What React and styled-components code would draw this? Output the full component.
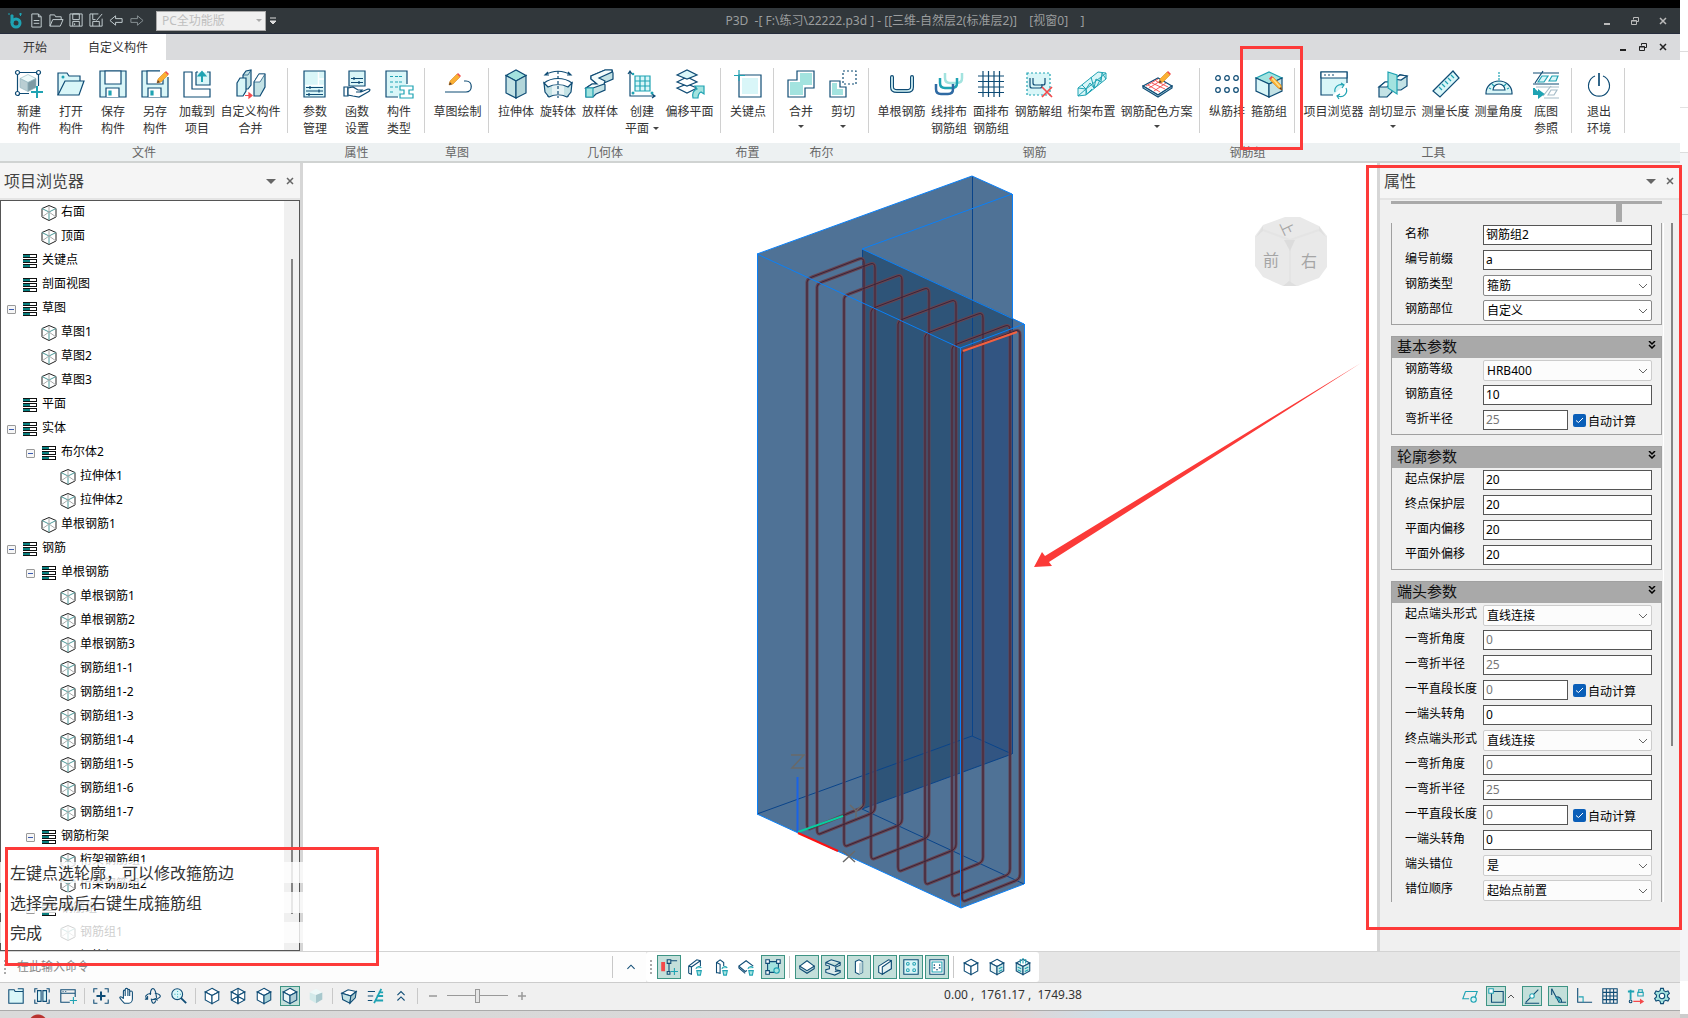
// App.jsx
import React from "react";
import styled, { createGlobalStyle } from "styled-components";

const NAVY = "#0f4c75";
const TEAL = "#1fa3b3";
const PALE = "#d9f6f8";
const MINT = "#a3e3df";
const GREY = "#c3e2e5";
const RED = "#f4494b";

/* ===== data ===== */
const ribbonGroups = [
  {
    title: "文件",
    first: true,
    items: [
      { icon: "newPart", lines: ["新建", "构件"] },
      { icon: "open", lines: ["打开", "构件"] },
      { icon: "save", lines: ["保存", "构件"] },
      { icon: "saveAs", lines: ["另存", "构件"] },
      { icon: "load", lines: ["加载到", "项目"] },
      { icon: "merge", lines: ["自定义构件", "合并"], width: 65 },
    ],
  },
  {
    title: "属性",
    items: [
      { icon: "params", lines: ["参数", "管理"] },
      { icon: "funcs", lines: ["函数", "设置"] },
      { icon: "types", lines: ["构件", "类型"] },
    ],
  },
  { title: "草图", items: [{ icon: "sketch", lines: ["草图绘制"], width: 53 }] },
  {
    title: "几何体",
    items: [
      { icon: "extrude", lines: ["拉伸体"] },
      { icon: "revolve", lines: ["旋转体"] },
      { icon: "loft", lines: ["放样体"] },
      { icon: "plane", lines: ["创建", "平面"], inlineArrow: true },
      { icon: "offset", lines: ["偏移平面"], width: 53 },
    ],
  },
  { title: "布置", items: [{ icon: "keyPoint", lines: ["关键点"] }] },
  {
    title: "布尔",
    items: [
      { icon: "union", lines: ["合并"], arrow: true },
      { icon: "cut", lines: ["剪切"], arrow: true },
    ],
  },
  {
    title: "钢筋",
    items: [
      { icon: "singleBar", lines: ["单根钢筋"], width: 53 },
      { icon: "lineBar", lines: ["线排布", "钢筋组"] },
      { icon: "gridBar", lines: ["面排布", "钢筋组"] },
      { icon: "ungroup", lines: ["钢筋解组"], width: 53 },
      { icon: "truss", lines: ["桁架布置"], width: 53 },
      { icon: "colors", lines: ["钢筋配色方案"], width: 77, arrow: true },
    ],
  },
  {
    title: "钢筋组",
    items: [
      { icon: "dots", lines: ["纵筋排"] },
      { icon: "stirrup", lines: ["箍筋组"] },
    ],
  },
  {
    title: "工具",
    items: [
      { icon: "browser", lines: ["项目浏览器"], width: 65 },
      { icon: "section", lines: ["剖切显示"], width: 53, arrow: true },
      { icon: "ruler", lines: ["测量长度"], width: 53 },
      { icon: "protractor", lines: ["测量角度"], width: 53 },
      { icon: "underlay", lines: ["底图", "参照"] },
    ],
  },
  { title: "", items: [{ icon: "power", lines: ["退出", "环境"] }] },
];

const treeItems = [
  { level: 1, text: "右面" },
  { level: 1, text: "顶面" },
  { level: 0, text: "关键点", folder: true },
  { level: 0, text: "剖面视图", folder: true },
  { level: 0, text: "草图", folder: true, open: true },
  { level: 1, text: "草图1" },
  { level: 1, text: "草图2" },
  { level: 1, text: "草图3" },
  { level: 0, text: "平面", folder: true },
  { level: 0, text: "实体", folder: true, open: true },
  { level: 1, text: "布尔体2", folder: true, open: true },
  { level: 2, text: "拉伸体1" },
  { level: 2, text: "拉伸体2" },
  { level: 1, text: "单根钢筋1" },
  { level: 0, text: "钢筋", folder: true, open: true },
  { level: 1, text: "单根钢筋", folder: true, open: true },
  { level: 2, text: "单根钢筋1" },
  { level: 2, text: "单根钢筋2" },
  { level: 2, text: "单根钢筋3" },
  { level: 2, text: "钢筋组1-1" },
  { level: 2, text: "钢筋组1-2" },
  { level: 2, text: "钢筋组1-3" },
  { level: 2, text: "钢筋组1-4" },
  { level: 2, text: "钢筋组1-5" },
  { level: 2, text: "钢筋组1-6" },
  { level: 2, text: "钢筋组1-7" },
  { level: 1, text: "钢筋桁架", folder: true, open: true },
  { level: 2, text: "桁架钢筋组1" },
  { level: 2, text: "桁架钢筋组2" },
  { level: 1, text: "钢筋组", folder: true, open: true },
  { level: 2, text: "钢筋组1" },
  { level: 2, text: "钢筋组", folder: true },
];

const propertyGroups = [
  {
    rows: [
      { label: "名称", value: "钢筋组2" },
      { label: "编号前缀", value: "a" },
      { label: "钢筋类型", select: "箍筋", strong: true },
      { label: "钢筋部位", select: "自定义", strong: true },
    ],
  },
  {
    title: "基本参数",
    rows: [
      { label: "钢筋等级", select: "HRB400" },
      { label: "钢筋直径", value: "10" },
      { label: "弯折半径", value: "25", auto: true },
    ],
  },
  {
    title: "轮廓参数",
    rows: [
      { label: "起点保护层", value: "20" },
      { label: "终点保护层", value: "20" },
      { label: "平面内偏移", value: "20" },
      { label: "平面外偏移", value: "20" },
    ],
  },
  {
    title: "端头参数",
    rows: [
      { label: "起点端头形式", select: "直线连接" },
      { label: "一弯折角度", value: "0", muted: true },
      { label: "一弯折半径", value: "25", muted: true },
      { label: "一平直段长度", value: "0", auto: true },
      { label: "一端头转角", value: "0" },
      { label: "终点端头形式", select: "直线连接" },
      { label: "一弯折角度", value: "0", muted: true },
      { label: "一弯折半径", value: "25", muted: true },
      { label: "一平直段长度", value: "0", auto: true },
      { label: "一端头转角", value: "0" },
      { label: "端头错位", select: "是" },
      { label: "错位顺序", select: "起始点前置" },
    ],
  },
];

/* ===== icons ===== */
const pencil = (
  <>
    <path d="M16 13l1-4 7-7 3 3-7 7z" fill="#fbb034" stroke="#d98a1c" strokeWidth=".6" />
    <path d="M24 2l1-1 3 3-1 1z" fill={RED} stroke="none" />
    <path d="M16 13l.8-3 2.2 2.200z" fill="#5a3b28" stroke="none" />
  </>
);

const cube = (fillL, fillR, fillT) => (
  <>
    <path d="M10 1.500l7.500 4L10 9.500l-7.500-4z" fill={fillT} />
    <path d="M2.500 5.500L10 9.500v9L2.500 14.500z" fill={fillL} />
    <path d="M17.500 5.500L10 9.500v9l7.500-4z" fill={fillR} />
  </>
);

const bigIcons = {
  newPart: (
    <>
      <path d="M4 2.500h18M2.500 4v18M4 23.500h10M23.500 4v12" />
      <g fill="#fff">
        <circle cx="2.500" cy="2.500" r="2" />
        <circle cx="23.500" cy="2.500" r="2" />
        <circle cx="2.500" cy="23.500" r="2" />
      </g>
      <g stroke="#8fb3bd" strokeWidth=".6">
        <path d="M13 4.500l8 4-8 4-8-4z" fill="#eefafa" />
        <path d="M5 8.500l8 4v9l-8-4z" fill="#b9ced3" />
        <path d="M21 8.500l-8 4v9l8-4z" fill="#7d9aa4" />
      </g>
      <path d="M22 16v12M16 22h12" stroke={TEAL} strokeWidth="2" />
    </>
  ),
  open: (
    <>
      <path d="M1 25V3h9l2 3h11v5" fill={PALE} />
      <path d="M1 25L8 11h19l-5 14z" fill={PALE} />
      <circle cx="6" cy="7" r="1.500" fill={TEAL} stroke="none" />
    </>
  ),
  save: (
    <>
      <path d="M1 1h26v26H1z" fill={PALE} />
      <path d="M6 1h16v13H6z" fill="#fff" />
      <path d="M7 27v-9h13v9" fill="#fff" />
      <path d="M10 21h2v4h-2z" fill={TEAL} stroke={TEAL} />
    </>
  ),
  saveAs: (
    <>
      <path d="M1 1h26v26H1z" fill={PALE} />
      <path d="M6 1h16v13H6z" fill="#fff" />
      <path d="M7 27v-9h13v9" fill="#fff" />
      <path d="M10 21h2v4h-2z" fill={TEAL} stroke={TEAL} />
      <path d="M19 0h9v7h-9z" fill="#fff" stroke="none" />
      {pencil}
    </>
  ),
  load: (
    <>
      <path d="M7 2H1v25h26v-8H9V2z" fill="#fff" />
      <path d="M13 2v13h14V2h-3M13 2h2" fill={PALE} />
      <path d="M19 12V3M16 5.500L19 2l3 3.500z" stroke={TEAL} strokeWidth="2" fill={TEAL} />
    </>
  ),
  merge: (
    <>
      <path d="M6 5l3-4 5-1v15l-3 4H6z" fill={GREY} />
      <path d="M6 5h5l3-5" strokeWidth=".7" />
      <path d="M0 13l3-5h6v13l-3 5H0z" fill={PALE} />
      <path d="M17 12l5-8h6v13l-5 9h-6z" fill={GREY} />
      <path d="M17 12l5-8h6l-5 8z" fill="#fff" strokeWidth=".7" />
      <path d="M8 25.500h6M12 23l3 2.500-3 2.500z" stroke={RED} fill={RED} />
    </>
  ),
  params: (
    <>
      <path d="M3 1h21v26H3z" fill={PALE} />
      <path d="M17.500 2v13M4 15.500h19M17 9h6" stroke="#fff" strokeWidth="1.500" />
      <path d="M5 17.500h17M5 21h17M5 24.500h17M9 16v3M18 19.500v3M8 23v3" />
    </>
  ),
  funcs: (
    <>
      <path d="M6 1h16v15H6z" fill={PALE} />
      <path d="M8 8.500h12M8 12.500h12M11 7v3M16 11v3" />
      <path d="M1 17h4v9H1z" fill="#fff" />
      <path d="M5 18l5-1 5 3h4l-2 2h-4 5l7-3c3 0 2 2 0 3l-9 5-6-1-5-1z" fill="#fff" />
    </>
  ),
  types: (
    <>
      <path d="M13 27H1V1h21v13" fill={PALE} />
      <path d="M5 6.500h3M10 6.500h8M5 12h3M10 12h8M5 17h3M10 17h3M5 22h3" stroke={TEAL} strokeDasharray="3 1" />
      <path d="M15 16h13v4h-4v4h4v4H15v-4h4v-4h-4z" fill="#fff" stroke={TEAL} />
    </>
  ),
  sketch: (
    <>
      <path d="M1 22h21c7 0 7-11 0-11h-2" />
      <g transform="translate(-11 2)">{pencil}</g>
    </>
  ),
  extrude: (
    <>
      <path d="M4 5.500L14 0l10 5.500L14 11z" fill={MINT} />
      <path d="M4 5.500l10 5.500v17L4 23z" fill={GREY} />
      <path d="M24 5.500L14 11v17l10-5z" fill="#b3d6da" />
    </>
  ),
  revolve: (
    <>
      <path d="M1 5c8-5 18-5 26 0M4 2L1 5h4M24 2l3 3h-4" />
      <path d="M0 13c8-6 20-6 28 0l-3 5-1 8c-6-3-14-3-20 0l-1-8z" fill="#fff" />
      <path d="M0 13l4 4c6-3 14-3 20 0l4-4-1 9-4 5c-6-3-12-3-18 0l-4-5z" fill={GREY} />
      <path d="M8 16c4-1 8-1 12 0v9c-4-1-8-1-12 0z" fill="#fff" stroke="none" opacity=".6" />
      <path d="M14 1v27" strokeDasharray="3 2" />
    </>
  ),
  loft: (
    <>
      <path d="M0 18l6-4h5l-6-5V6l14-6h7l1 3v6l-9 4 1 2v5l-9 4-3 3H0z" fill={GREY} />
      <path d="M5 6l14-6h7v2l-13 6 6 3-1 3-11 4H0l6-4h5l-6-5z" fill="#f4fcfc" />
      <path d="M0 18h7v9H0z" fill={MINT} stroke={TEAL} />
    </>
  ),
  plane: (
    <>
      <path d="M2 1v25h24M0 4l2-3 2 3M24 24l3 2-3 2" />
      <path d="M7 6h15v15H7zM12 6v15M17 6v15M7 11h15M7 16h15" stroke={TEAL} fill={PALE} />
      <circle cx="5" cy="4" r="1.300" fill={TEAL} stroke="none" />
      <circle cx="5" cy="23" r="1.500" fill={TEAL} stroke="none" />
      <circle cx="24" cy="23" r="1.500" fill={TEAL} stroke="none" />
    </>
  ),
  offset: (
    <g>
      <path d="M1 18l10-4 10 4-10 5z" fill="#fff" />
      <path d="M1 12l10-5 10 5-10 4z" fill="#fff" />
      <path d="M1 5l10-5 10 5-10 4z" fill={PALE} />
      <path d="M17 28c-1-5 1-8 4-9l-2-3h9v8l-3-2c-2 1-3 3-3 6z" fill={MINT} stroke={TEAL} />
    </g>
  ),
  keyPoint: (
    <>
      <path d="M5 5h22v22H5z" fill="#fff" />
      <path d="M8 8h16v16H8z" fill={PALE} stroke="none" />
      <path d="M5 0v11M0 5.500h11" stroke={TEAL} />
    </>
  ),
  union: (
    <>
      <path d="M10 1h17v17h-9v9H1V10h9z" fill="#fff" />
      <path d="M13 3h12v12h-9v10H3V12h10z" fill={MINT} stroke="none" />
    </>
  ),
  cut: (
    <>
      <path d="M14 1h13v13H14z" strokeDasharray="2 2" />
      <path d="M1 11h10v6h6v10H1z" fill="#fff" />
      <path d="M3 13h5v6h6v6H3z" fill={MINT} stroke="none" />
    </>
  ),
  singleBar: (
    <>
      <path d="M4 7v10q0 4 5 4h10q5 0 5-4V7" strokeWidth="4" strokeLinecap="round" />
      <path d="M4 7v10q0 4 5 4h10q5 0 5-4V7" strokeWidth="1.700" stroke={PALE} strokeLinecap="round" />
    </>
  ),
  lineBar: (
    <g strokeWidth="2.500">
      <path d="M10 3v5q0 5 5 5h7q5 0 5-5V3" stroke={MINT} />
      <path d="M5 8v5q0 5 5 5h7q5 0 5-5V8" stroke={TEAL} />
      <path d="M1 14v5q0 5 5 5h7q5 0 5-5v-5" stroke="#2f6aa3" />
    </g>
  ),
  gridBar: <path d="M6 1v26M11.500 1v26M17 1v26M22.500 1v26M1 6h26M1 11.500h26M1 17h26M1 22.500h26" />,
  ungroup: (
    <>
      <path d="M2 3h23v22H2z" strokeDasharray="2 2" fill={PALE} stroke={TEAL} />
      <path d="M5 8v8q0 2 2 2h8q2 0 2-2v-2M8 8v5q0 2 2 2h8q2 0 2-2V8" strokeWidth="1.200" />
      <path d="M17 17l10 10M27 17L17 27" stroke={RED} strokeWidth="1.700" />
    </>
  ),
  truss: (
    <g stroke={TEAL} strokeWidth="1">
      <path d="M0 18L20 2l8 1v6L8 25l-8 1z" fill={PALE} />
      <path d="M0 18l8 1L28 3M8 19v6M0 26l8-7 4-6 4 5 2-9 5 3 1-9 4 6M4 15l4 4 1 5 5-5M13 7l3 11 3-2 4-8" />
    </g>
  ),
  colors: (
    <>
      <path d="M0 16L15 8l14 8-14 9z" fill="#fff" />
      <path d="M0 16v2l15 9 14-9v-2l-14 9z" fill={PALE} />
      <path d="M5 15l12 7M9 13l13 6M13 11l12 6M6 18l13-8M11 21l12-8M3 16l12-7" stroke={RED} strokeWidth=".9" />
      {pencil}
    </>
  ),
  dots: (
    <g fill="#fff">
      {[5, 14, 23].map((x) => (
        <React.Fragment key={x}>
          <circle cx={x} cy="8" r="2.300" />
          <circle cx={x} cy="20" r="2.300" />
        </React.Fragment>
      ))}
    </g>
  ),
  stirrup: (
    <>
      <path d="M1 8l13-6 13 6-13 6z" fill={MINT} stroke={TEAL} />
      <path d="M1 8l13 6v13L1 21z" fill={PALE} />
      <path d="M27 8l-13 6v13l13-6z" fill={GREY} />
      <path d="M15 10l3-3 8 8 1 5-4-2z" fill="#fbb034" stroke="#d98a1c" strokeWidth=".6" />
      <path d="M17 8l8 9" stroke="#fde08a" strokeWidth="1.500" />
      <path d="M15 10l3-3-1.500-1-2.500 2.500z" fill={RED} stroke="none" />
      <path d="M27 20l-.8-3-2 1.800z" fill="#5a3b28" stroke="none" />
    </>
  ),
  browser: (
    <>
      <path d="M13 25H1V2h26v11" fill={PALE} />
      <path d="M1 2h26v6H1z" fill="#fff" />
      <path d="M4 5h2M8 5h2M12 5h2" />
      <path d="M15 22a6 6 0 0 1 8-7M26 18a6 6 0 0 1-8 8M21 13l3 2-2 3M20 24l-3 2 2 3" stroke={TEAL} />
    </>
  ),
  section: (
    <>
      <path d="M15 9l6-4 7 1v10l-6 4h-7z" fill={GREY} />
      <path d="M15 9l6-4 7 1-6 4z" fill="#fff" />
      <path d="M0 17l6-5h7v10l-5 5H0z" fill={GREY} />
      <path d="M0 17l6-5h7l-5 5z" fill="#fff" />
      <path d="M9 2l9 3v19l-9-6z" fill={MINT} stroke={TEAL} />
    </>
  ),
  ruler: (
    <>
      <path d="M1 21L21 1l6 7L8 27z" fill={PALE} />
      <path d="M7 17l3 3M10 14l3 3M13 11l3 3M16 8l3 3M19 5l3 3" stroke={TEAL} />
    </>
  ),
  protractor: (
    <>
      <path d="M1 23a13 12 0 0 1 26 0v1H1z" fill={PALE} />
      <path d="M8 20a6 6 0 0 1 12 0z" fill="#fff" />
      <path d="M14 2v10" stroke={TEAL} strokeDasharray="2 1" />
      <path d="M4 18l2 1M7 14l2 2M24 18l-2 1M21 14l-2 2" stroke={TEAL} />
    </>
  ),
  underlay: (
    <>
      <path d="M1 3h26M1 14h26M3 13L11 1" />
      <path d="M6 12l4-6h6l-4 6zM17 11l3-5h6l-2 5z" fill={PALE} stroke={TEAL} />
      <path d="M4 17h23M12 28h15M11 26l8-10M16 25l3-5h6l-3 5z" stroke="#a6bcc8" />
      <path d="M2 18v6h7M7 21l4 3-4 3z" stroke={TEAL} strokeWidth="2" fill={TEAL} />
    </>
  ),
  power: (
    <>
      <path d="M14 3v13" strokeWidth="1.700" />
      <path d="M10 6a10.500 10.500 0 1 0 8 0" />
    </>
  ),
};

const smallIcons = {
  folder: <path d="M2 18V3h6l1 2h9v13zM9 5h9V2h-6" fill={PALE} />,
  columns: (
    <>
      <path d="M5 2H2v4M15 2h3v4M5 18H2v-4M15 18h3v-4" />
      <path d="M5 4h4v12H5zM11 4h4v12h-4z" fill={PALE} />
    </>
  ),
  windowAdd: (
    <>
      <path d="M12 17H2V3h16v8M2 7h16M4 5h1M7 5h1" />
      <path d="M16 11v8M12 15h8" stroke={TEAL} />
    </>
  ),
  focus: (
    <>
      <path d="M6 2H2v4M14 2h4v4M6 18H2v-4M14 18h4v-4" />
      <path d="M10 5v10M5 10h10" strokeWidth="2.200" />
    </>
  ),
  hand: <path d="M7 18c-2-2-4-4-5-6 0-2 3-1 4 1V5c0-2 2-2 2 0v5V3c0-2 3-2 3 0v7V4c0-2 2-2 2 0v6V6c0-2 3-2 3 0v7c0 3-2 5-4 5z" fill="#fff" />,
  orbit: (
    <>
      <path d="M8 7C2 8 0 11 4 13M12 7c7 1 8 4 3 6l-6 1M4 10v3.500H1" />
      <path d="M7 9c0-8 4-10 6-3l1 6M8 13c1 7 4 6 5 2M11 14l2-1 2 2" />
    </>
  ),
  zoom: (
    <>
      <circle cx="8" cy="8" r="6" fill={PALE} />
      <path d="M12 12l6 6" strokeWidth="2" />
      <path d="M5 8h1M8 8h1M11 8h1M8 5h1M8 11h1" stroke={TEAL} />
    </>
  ),
  cubeWire: cube("#fff", "#fff", "#fff"),
  cubeStar: (
    <>
      {cube("#fff", "#fff", "#fff")}
      <path d="M10 1.500v17M2.500 14.500l7.500-4 7.500 4" />
    </>
  ),
  cubeHalf: cube("#fff", "#a9d3da", "#fff"),
  cubeSolid: cube("#e8f4f5", "#aecdd5", "#fff"),
  cubePale: (
    <>
      <path d="M10 2l7 4-7 3-7-3z" fill="#edf8f8" stroke="none" />
      <path d="M3 6l7 3v9l-7-4z" fill="#d3eaea" stroke="none" />
      <path d="M17 6l-7 3v9l7-4z" fill="#a8c8cd" stroke="none" />
    </>
  ),
  block: (
    <>
      <path d="M2 7l7-4 9 2-6 5z" fill="#fff" />
      <path d="M2 7l10 3-1 8-8-4z" fill={GREY} />
      <path d="M12 10l6-5-1 7-6 6z" fill="#a9c9cf" />
    </>
  ),
  lines: (
    <>
      <path d="M2 5h8M2 10h6M2 15h5" />
      <path d="M9 18L17 2M14 6h5M12 10h7M11 15h8" stroke={TEAL} strokeWidth="2" />
    </>
  ),
  doubleUp: <path d="M6 9l4-4 4 4M6 15l4-4 4 4" />,
  chevronUp: <path d="M6 12l4-4 4 4" />,
  tag: (
    <>
      <path d="M5 5h13l-3 8M5 5L2 13h7" stroke={TEAL} />
      <circle cx="14" cy="14" r="3" stroke={TEAL} fill={PALE} />
    </>
  ),
  snapBox: (
    <>
      <path d="M5 5h13v12H5z" />
      <path d="M2 2h5v5H2z" fill="#fff" stroke={TEAL} />
    </>
  ),
  snapLine: (
    <>
      <path d="M2 18h16M3 17L17 3" />
      <circle cx="10" cy="10" r="2.500" fill="#fff" stroke={TEAL} />
    </>
  ),
  snapAngle: (
    <>
      <path d="M19 17h-8L3 2" />
      <path d="M3 2v7M8 11c4 0 6 2 6 6" />
      <path d="M7 12c3 0 5 2 5 5" stroke={TEAL} />
    </>
  ),
  ortho: (
    <>
      <path d="M3 1v16h16" />
      <path d="M4 11h5v6" stroke={TEAL} />
    </>
  ),
  grid: <path d="M2 2h16v16H2zM6 2v16M10 2v16M14 2v16M2 6h16M2 10h16M2 14h16" />,
  axisLock: (
    <>
      <path d="M4 14V3M1 5h7" stroke={TEAL} strokeWidth="2" />
      <circle cx="4" cy="16" r="1.500" />
      <path d="M7 16h10M15 14l3 2-3 2z" stroke={RED} fill={RED} />
      <path d="M12 6h6v4h-6zM13 6V3h4v3" stroke={TEAL} />
    </>
  ),
  gear: (
    <>
      <path
        d="M8.500 1.500h3l.6 2.600 2 1.100 2.500-.8 1.600 2.700-2 1.900v2l2 1.900-1.600 2.700-2.500-.8-2 1.100-.6 2.600h-3l-.6-2.600-2-1.100-2.500.8-1.600-2.700 2-1.900v-2l-2-1.900 1.600-2.700 2.500.8 2-1.100z"
        fill={MINT}
      />
      <circle cx="10" cy="10" r="3" fill="#fff" />
    </>
  ),
  beamAdd: (
    <>
      <path d="M2 5h3v9H2z" fill={RED} stroke={RED} />
      <path d="M8 2h4v4H8zM8 15h3v3H8zM10 6v9M12 3h7" />
      <path d="M16 11v8M12 15h8" stroke={TEAL} />
    </>
  ),
  slabSwap: (
    <>
      <path d="M3 17V9l9-7 4 1v6M3 9l3 1v8l-3-1M6 10l10-7" fill="#fff" />
      <path d="M11 12c1-3 4-3 6-1M12 14h5l-1 5h-3z" stroke={TEAL} fill={MINT} />
    </>
  ),
  columnSwap: (
    <>
      <path d="M5 17V5l4-3 4 3v4M5 5l4 2v10l-4-1" fill="#fff" />
      <path d="M11 12c1-3 4-3 6-1M12 14h5l-1 5h-3z" stroke={TEAL} fill={MINT} />
    </>
  ),
  planeSwap: (
    <>
      <path d="M10 14l-2 1-7-6 8-6 8 6M1 9v2l7 6" fill="#fff" />
      <path d="M11 12c1-3 4-3 6-1M12 14h5l-1 5h-3z" stroke={TEAL} fill={MINT} />
    </>
  ),
  frameEye: (
    <>
      <path d="M4 4h12v12H4z" fill={MINT} />
      <path d="M2 2h4v4H2zM14 2h4v4h-4zM2 14h4v4H2z" fill="#fff" />
      <circle cx="14" cy="14" r="3" fill={MINT} stroke={TEAL} />
    </>
  ),
  slab: (
    <>
      <path d="M2 9v3l8 5 8-5V9z" fill="#b9d3d8" />
      <path d="M2 9l8-6 8 6-8 5z" fill="#fff" />
    </>
  ),
  beam: <path d="M2 5l6-3 10 3v3l-5 2v3l5 1v2l-6 3L2 16v-3l4-1V9L2 8zM2 5l10 4 6-4M12 15l6-1" fill="#dcebed" />,
  column: (
    <>
      <path d="M6 4l4-2 4 2v12l-4 2-4-2z" fill="#fff" />
      <path d="M10 6l4-2v12l-4 2z" fill="#b9d3d8" stroke="none" />
    </>
  ),
  wall: (
    <>
      <path d="M3 9l11-7 3 1v9L7 18l-4-2z" fill="#fff" />
      <path d="M7 10l10-7v9L7 18z" fill="#e3f1f3" />
    </>
  ),
  fourDots: (
    <>
      <path d="M2 2h16v16H2z" fill={PALE} />
      <g stroke={TEAL} fill="#fff">
        <circle cx="6.500" cy="6.500" r="1.500" />
        <circle cx="13.500" cy="6.500" r="1.500" />
        <circle cx="6.500" cy="13.500" r="1.500" />
        <circle cx="13.500" cy="13.500" r="1.500" />
      </g>
    </>
  ),
  socket: (
    <>
      <path d="M2 2h16v16H2z" fill="#fff" />
      <path d="M4.500 4.500h11v11h-11z" stroke={TEAL} />
      <path d="M7 7v2M13 7v2M6 11h2M12 11h2M9 13h2" />
    </>
  ),
  cubeRibs: (
    <>
      {cube("#e8f4f5", "#cdeaea", "#fff")}
      <path d="M12 12l4-2M12 15l4-2" stroke={TEAL} />
    </>
  ),
  cubeRibsTop: (
    <>
      {cube("#cdeaea", "#cdeaea", "#fff")}
      <path d="M12 12l4-2M12 15l4-2M4 10l4 2M4 13l4 2M7 1v5M10 0v6M13 1v5" stroke={TEAL} />
    </>
  ),
};

const quickIcons = {
  新建: <path d="M3 1h7l3 3v11H3zM10 1v3h3M5 8h6M5 11h6" />,
  打开: <path d="M1 14V2h5l1 2h6v3M1 14l3-7h11l-3 7z" />,
  保存: <path d="M1 1h13v13H1zM4 1h7v6H4zM4 14V9h7v5M6 11v2" />,
  另存为: <path d="M10 1H1v13h13V6M4 1v6h3M4 14V9h7v5M8 8l6-7" />,
  撤销: <path d="M1 8l6-5v3h7v4H7v3z" />,
};

/* ===== ribbon ===== */
function RibbonButton({ icon, lines, width = 42, arrow, inlineArrow }) {
  return (
    <ToolButton type="button" $width={width}>
      <BigIcon viewBox="0 0 28 28" aria-hidden="true">
        {bigIcons[icon]}
      </BigIcon>
      {lines.map((line, i) => (
        <ToolLine key={line}>
          {line}
          {inlineArrow && i === 1 && <Caret />}
        </ToolLine>
      ))}
      {arrow && (
        <ToolLine>
          <Caret />
        </ToolLine>
      )}
    </ToolButton>
  );
}

function SmallTool({ name, size = 20, active, label }) {
  return (
    <SmallButton type="button" $size={size} $active={active} aria-label={label || name}>
      <svg viewBox="0 0 20 20" aria-hidden="true">
        {smallIcons[name]}
      </svg>
    </SmallButton>
  );
}

function WindowControls({ dark }) {
  return (
    <Controls $dark={dark}>
      <button type="button" aria-label="最小化">
        <svg viewBox="0 0 10 10"><path d="M2 8h6" strokeWidth="2" /></svg>
      </button>
      <button type="button" aria-label="还原">
        <svg viewBox="0 0 10 10"><path d="M3.500 3.500v-2h5v4h-2M1.500 4.500h5v4h-5zM1.500 5h5" /></svg>
      </button>
      <button type="button" aria-label="关闭">
        <svg viewBox="0 0 10 10"><path d="M2 2l6 6M8 2L2 8" strokeWidth="1.500" /></svg>
      </button>
    </Controls>
  );
}

/* ===== panels ===== */
function PanelTitle({ children }) {
  return (
    <PanelHeader>
      <h2>{children}</h2>
      <button type="button" aria-label="菜单">
        <svg width="10" height="10" viewBox="0 0 10 10"><path d="M0 3h10L5 8z" fill="#666" /></svg>
      </button>
      <button type="button" aria-label="关闭">
        <svg width="10" height="10" viewBox="0 0 10 10"><path d="M2 2l6 6M8 2L2 8" stroke="#666" strokeWidth="1.500" /></svg>
      </button>
    </PanelHeader>
  );
}

function TreeItem({ level, text, folder, open }) {
  return (
    <TreeRow $level={level}>
      <ExpanderSlot>
        {open && <Expander type="button" aria-label={`折叠 ${text}`} />}
      </ExpanderSlot>
      <svg width="18" height="18" viewBox="0 0 18 18" aria-hidden="true">
        {folder ? (
          <>
            <path d="M2 2h14v4H2zM2 7h14v4H2zM2 12h14v4H2z" fill="#111" />
            <path d="M9 3h6v2H9zM9 8h6v2H9zM9 13h6v2H9z" fill="#fff" />
            <path d="M2 3h7v2H2zM2 8h7v2H2zM2 13h7v2H2z" fill="#0b8080" />
          </>
        ) : (
          <g fill="none" stroke="#222">
            <path d="M9 1.500l7 3v8.500l-7 3.500-7-3.500V4.500z" />
            <path d="M2 4.500L9 8l7-3.500M9 8v8" stroke="#4b9999" />
            <path d="M2 13l7-5 7 5M9 2v6" stroke="#aaa" />
          </g>
        )}
      </svg>
      <span>{text}</span>
    </TreeRow>
  );
}

function PropertyRow({ row, id }) {
  return (
    <Row>
      <label htmlFor={id}>{row.label}</label>
      {row.select ? (
        <SelectBox $strong={row.strong}>
          <select id={id} defaultValue={row.select}>
            <option>{row.select}</option>
          </select>
          <svg width="10" height="6" viewBox="0 0 10 6" aria-hidden="true">
            <path d="M1 1l4 4 4-4" fill="none" stroke="#666" />
          </svg>
        </SelectBox>
      ) : (
        <TextBox id={id} defaultValue={row.value} $short={row.auto} $muted={row.auto || row.muted} />
      )}
      {row.auto && (
        <AutoLabel>
          <CheckBox>
            <input type="checkbox" defaultChecked />
            <svg width="9" height="7" viewBox="0 0 9 7" aria-hidden="true">
              <path d="M1 3.500l2.500 2L8 1" fill="none" stroke="#fff" />
            </svg>
          </CheckBox>
          自动计算
        </AutoLabel>
      )}
    </Row>
  );
}

/* ===== 3d view ===== */
// left x, left top y, right x, right top y; every stirrup is 551px high
const stirrups = [
  [807, 278, 864, 257],
  [817, 283, 875, 262],
  [844, 295, 902, 274],
  [871, 308, 929, 287],
  [898, 320, 956, 299],
  [925, 333, 983, 312],
  [952, 345, 1010, 324],
  [962, 350, 1020, 329],
];

const stirrupPath = ([xl, yl, xr, yr]) => {
  const bl = yl + 551;
  const br = yr + 551;
  return `M${xl} ${yl + 4}V${bl - 4}q0 6 5 3L${xr - 5} ${br + 1}q5 -2 5 -7V${yr + 6}q0 -6 -5 -4L${xl + 5} ${yl - 1}q-5 2 -5 5`;
};

function Model() {
  return (
    <ModelSvg viewBox="303 163 1074 788" role="img" aria-label="三维视图">
      <path d="M757 254L972 176l40 18v124l12 6v560l-63 24-204-94z" fill="#4f7296" />
      <path d="M862 249l150 69v436l-150 55z" fill="#2e5478" />
      <path d="M961 348l51-19v425l-51 18z" fill="#325582" />
      <path d="M972.500 176v560M862.500 249v560M1012.500 318v436M757 814l215-78 40 18-150 55 162 75" fill="none" stroke="#0a448a" />
      <g fill="none" stroke="#654350" strokeWidth="3">
        {stirrups.map((s) => (
          <path key={s[0]} d={stirrupPath(s)} />
        ))}
      </g>
      <g fill="none" stroke="#3a2339" strokeWidth="1">
        {stirrups.map((s) => (
          <path key={s[0]} d={stirrupPath(s)} />
        ))}
      </g>
      <path d="M963 351l54-19" stroke="#f4603f" strokeWidth="2" fill="none" />
      <g fill="none" stroke="#0a80f8">
        <path d="M757.500 254v560M757 254l215-78 40 18-150 55 162 75-64 24z" />
        <path d="M1012.500 194v124M1024.500 324v560M960.500 348v560M757 814l204 94 63-24" />
      </g>
      <g fill="none" strokeWidth="2">
        <path d="M797.500 777v55" stroke="#1a63e6" />
        <path d="M798 832l45-16" stroke="#08cda0" />
        <path d="M798 833l40 18" stroke="#ff1111" />
      </g>
      <path
        d="M791 755h13l-12 13h12M850 805l6 6 6-6M856 811v7M843 862l12-11M843 851l12 11"
        fill="none"
        stroke="#696969"
        strokeWidth="1.500"
      />
      <path d="M1361 363L1049 562l3 4-18 1 8-15 3 4z" fill="#fb3a38" />
    </ModelSvg>
  );
}

function ViewCube() {
  return (
    <CubeSvg viewBox="0 0 72 72" role="img" aria-label="视图方块">
      <path d="M30 1h15l19 9 8 10v31l-8 11-21 8H28L8 61 0 50V20L8 9z" fill="#e9e9e9" />
      <path d="M8 14l27 10v43M64 14L35 24" fill="none" stroke="#e4e4e4" strokeWidth="2" />
      <path d="M29 24h11l-5 11z" fill="#dcdcdc" />
      <path d="M28 70l6-5 8 5z" fill="#dedede" />
      <path d="M8 10v5l-7 6zM64 10v5l7 6z" fill="#e0e0e0" />
      <g fill="#a5a5a5" fontSize="16" fontFamily="'Noto Sans CJK SC', sans-serif">
        <text x="8" y="50">前</text>
        <text x="46" y="51">右</text>
        <text x="25" y="17" fontSize="14" transform="rotate(65 32 12)">上</text>
      </g>
    </CubeSvg>
  );
}

/* ===== app ===== */
export default function App() {
  return (
    <Page>
      <GlobalStyle />
      <Shell>
        <TopEdge />
        <TitleBar>
          <QuickAccess>
            <Logo viewBox="0 0 16 16" aria-hidden="true">
              <circle cx="9" cy="10" r="4" fill="none" stroke={TEAL} strokeWidth="3" />
              <path d="M4 2h2v8H4zM12 1h3M13.500 0v3M1 1h2" stroke={TEAL} fill={TEAL} />
            </Logo>
            {Object.entries(quickIcons).map(([name, icon]) => (
              <QuickButton key={name} type="button" aria-label={name}>
                <svg viewBox="0 0 16 16">{icon}</svg>
              </QuickButton>
            ))}
            <QuickButton type="button" aria-label="重做" $dim>
              <svg viewBox="0 0 16 16"><path d="M15 8L9 3v3H2v4h7v3z" /></svg>
            </QuickButton>
            <VersionBox>
              <select aria-label="版本" defaultValue="PC全功能版" disabled>
                <option>PC全功能版</option>
              </select>
              <Caret $color="#aaa" />
            </VersionBox>
            <MoreButton type="button" aria-label="更多">
              <svg width="8" height="8" viewBox="0 0 8 8"><path d="M1 1h6M1 4h6L4 7z" fill="#ddd" stroke="#ddd" /></svg>
            </MoreButton>
          </QuickAccess>
          <AppTitle>
            {"P3D  -[ F:\\练习\\22222.p3d ] - [[三维-自然层2(标准层2)]    [视窗0]    ]"}
          </AppTitle>
          <WindowControls dark />
        </TitleBar>

        <TabStrip>
          <Tab type="button" $width={70}>开始</Tab>
          <Tab type="button" $width={96} $active>自定义构件</Tab>
          <WindowControls />
        </TabStrip>

        <Ribbon>
          {ribbonGroups.map((group) => (
            <RibbonGroup key={group.title || "exit"}>
              <GroupTools $first={group.first}>
                {group.items.map((item) => (
                  <RibbonButton key={item.icon} {...item} />
                ))}
              </GroupTools>
              <GroupTitle>{group.title}</GroupTitle>
            </RibbonGroup>
          ))}
          <RibbonRest />
        </Ribbon>

        <Workspace>
          <SidePanel>
            <PanelTitle>项目浏览器</PanelTitle>
            <TreeBox>
              <TreeList>
                {treeItems.map((item, i) => (
                  <TreeItem key={i} {...item} />
                ))}
              </TreeList>
              <TreeScroll>
                <i />
              </TreeScroll>
            </TreeBox>
          </SidePanel>
          <Splitter />
          <Viewport>
            <Model />
            <ViewCube />
          </Viewport>
          <Splitter />
          <SidePanel>
            <PanelTitle>属性</PanelTitle>
            <PropertyBody>
              <ZoomTrack>
                <i />
              </ZoomTrack>
              <PropertyScroll>
                <PropertyList>
                  {propertyGroups.map((group, g) => (
                    <PropertyGroup key={g} $cut={!group.title}>
                      {group.title && (
                        <PropertyHead>
                          <h3>{group.title}</h3>
                          <svg width="8" height="8" viewBox="0 0 8 8" aria-hidden="true">
                            <path d="M1 0l3 3 3-3M1 4l3 3 3-3" fill="none" stroke="#000" strokeWidth="1.500" />
                          </svg>
                        </PropertyHead>
                      )}
                      {group.rows.map((row, r) => (
                        <PropertyRow key={r} row={row} id={`prop-${g}-${r}`} />
                      ))}
                    </PropertyGroup>
                  ))}
                </PropertyList>
                <PropertyThumb />
              </PropertyScroll>
            </PropertyBody>
          </SidePanel>
          <Messages>
            <p>左键点选轮廓，可以修改箍筋边</p>
            <p>选择完成后右键生成箍筋组</p>
            <p>完成</p>
          </Messages>
        </Workspace>

        <CommandBar>
          <CommandLine>
            <Grip />
            <input aria-label="命令" placeholder="在此输入命令" />
            <Divider $tall />
            <SmallTool name="chevronUp" size={30} label="展开命令历史" />
          </CommandLine>
          <CommandTools>
            <Grip />
            <SmallTool name="beamAdd" size={24} active />
            <SmallTool name="slabSwap" size={24} />
            <SmallTool name="columnSwap" size={24} />
            <SmallTool name="planeSwap" size={24} />
            <SmallTool name="frameEye" size={24} active />
            <Divider $tall />
            <SmallTool name="slab" size={24} active />
            <SmallTool name="beam" size={24} active />
            <SmallTool name="column" size={24} active />
            <SmallTool name="wall" size={24} active />
            <SmallTool name="fourDots" size={24} active />
            <SmallTool name="socket" size={24} active />
            <Divider $tall />
            <SmallTool name="cubeWire" size={24} />
            <SmallTool name="cubeRibs" size={24} />
            <SmallTool name="cubeRibsTop" size={24} />
          </CommandTools>
        </CommandBar>

        <StatusBar>
          <StatusTools>
            <SmallTool name="folder" />
            <SmallTool name="columns" />
            <SmallTool name="windowAdd" />
            <Divider />
            <SmallTool name="focus" />
            <SmallTool name="hand" />
            <SmallTool name="orbit" />
            <SmallTool name="zoom" />
            <Divider />
            <SmallTool name="cubeWire" />
            <SmallTool name="cubeStar" />
            <SmallTool name="cubeHalf" />
            <SmallTool name="cubeSolid" active />
            <SmallTool name="cubePale" />
            <Divider />
            <SmallTool name="block" />
            <SmallTool name="lines" />
            <SmallTool name="doubleUp" />
            <Divider />
            <ZoomStep type="button" aria-label="缩小">
              <svg width="8" height="8" viewBox="0 0 8 8"><path d="M0 4h8" /></svg>
            </ZoomStep>
            <Slider type="range" aria-label="缩放" defaultValue="50" />
            <ZoomStep type="button" aria-label="放大">
              <svg width="8" height="8" viewBox="0 0 8 8"><path d="M0 4h8M4 0v8" /></svg>
            </ZoomStep>
          </StatusTools>
          <Coordinates>0.00 ,  1761.17 ,  1749.38</Coordinates>
          <StatusTools $end>
            <SmallTool name="tag" />
            <SnapGroup>
              <SmallTool name="snapBox" active />
              <svg width="8" height="6" viewBox="0 0 8 6"><path d="M1 5l3-3 3 3" fill="none" stroke="#555" /></svg>
            </SnapGroup>
            <SmallTool name="snapLine" active />
            <SmallTool name="snapAngle" active />
            <SmallTool name="ortho" />
            <SmallTool name="grid" />
            <SmallTool name="axisLock" />
            <SmallTool name="gear" />
          </StatusTools>
        </StatusBar>
        <Desktop />
        <RibbonMark />
        <MessageMark />
        <PanelMark />
      </Shell>
      <BackWindow />
    </Page>
  );
}

/* ===== styles ===== */
const GlobalStyle = createGlobalStyle`
  * {
    box-sizing: border-box;
  }
  body {
    margin: 0;
    font-family: "Noto Sans", "Noto Sans CJK SC", sans-serif;
    font-size: 12px;
    color: #333;
  }
  button, input, select {
    font: inherit;
    color: inherit;
  }
  button {
    border: 0;
    padding: 0;
    background: none;
    cursor: pointer;
  }
  h2, h3, p, ul {
    margin: 0;
    padding: 0;
    font-weight: 400;
  }
`;

const Page = styled.div`
  display: flex;
  height: 100vh;
  overflow: hidden;
`;

const Shell = styled.div`
  position: relative;
  display: flex;
  flex-direction: column;
  flex: 1;
  min-width: 0;
  background: #f0f0f0;
`;

const BackWindow = styled.div`
  width: 8px;
  background: linear-gradient(
    #fff 51px, #ddd 51px 52px, #fff 52px 107px, #e2e2e2 107px 108px,
    #fff 108px 152px, #ddd 152px 153px, #f4f5f7 153px 214px, #ccc 214px 215px,
    #f4f5f7 215px 981px, #fff 981px 1014px, #ccc 1014px
  );
`;

const TopEdge = styled.div`
  flex: none;
  height: 8px;
  background: #000;
`;

const TitleBar = styled.header`
  display: grid;
  grid-template-columns: 1fr auto 1fr;
  align-items: center;
  flex: none;
  height: 26px;
  background: #31373b;
  border-bottom: 1px solid #252c3c;
`;

const QuickAccess = styled.div`
  display: flex;
  align-items: center;
  padding-left: 7px;
`;

const Logo = styled.svg`
  width: 16px;
  height: 16px;
  margin-right: 3px;
`;

const QuickButton = styled.button`
  width: 20px;
  height: 20px;
  opacity: ${({ $dim }) => ($dim ? 0.6 : 1)};

  svg {
    display: block;
    width: 15px;
    height: 15px;
    margin: auto;
    fill: none;
    stroke: #c9d3d6;
  }
`;

const VersionBox = styled.div`
  display: grid;
  align-items: center;
  width: 110px;
  height: 20px;
  margin-left: 10px;

  > * {
    grid-area: 1 / 1;
  }
  select {
    appearance: none;
    width: 100%;
    height: 20px;
    padding: 0 5px;
    border: 1px solid #aaa;
    background: #f0f0f0;
    color: #bfbfbf;
    opacity: 1;
  }
  i {
    justify-self: end;
    margin-right: 4px;
  }
`;

const MoreButton = styled.button`
  margin-left: 3px;
  line-height: 8px;
`;

const AppTitle = styled.h1`
  margin: 0 0 0 130px;
  font-size: 12px;
  font-weight: 400;
  line-height: 24px;
  color: #9b9d9e;
  white-space: pre;
`;

const Controls = styled.div`
  display: flex;
  justify-content: flex-end;
  gap: ${({ $dark }) => ($dark ? 18 : 10)}px;
  margin-left: auto;
  padding-right: 12px;

  svg {
    display: block;
    width: 10px;
    height: 10px;
    fill: none;
    stroke: ${({ $dark }) => ($dark ? "#bbb" : "#222")};
  }
`;

const TabStrip = styled.nav`
  display: flex;
  align-items: center;
  flex: none;
  height: 26px;
  background: #dadbdd;
`;

const Tab = styled.button`
  width: ${({ $width }) => $width}px;
  height: 26px;
  background: ${({ $active }) => ($active ? "#fff" : "none")};
  color: #333;
`;

const Ribbon = styled.div`
  display: flex;
  flex: none;
  background: #fff;
  border-bottom: 2px solid #d0d3d2;
`;

const RibbonGroup = styled.section`
  display: flex;
  flex-direction: column;
`;

const GroupTools = styled.div`
  display: flex;
  height: 65px;
  margin: 8px 0 10px;
  padding: 0 4px 0 ${({ $first }) => ($first ? 8 : 6)}px;
  border-right: 1px solid #d0d0d0;
`;

const GroupTitle = styled.div`
  height: 18px;
  line-height: 20px;
  text-align: center;
  background: #edf1f2;
  color: #666;
`;

const RibbonRest = styled.div`
  flex: 1;
  align-self: flex-end;
  height: 18px;
  background: #edf1f2;
`;

const ToolButton = styled.button`
  display: flex;
  flex-direction: column;
  align-items: center;
  width: ${({ $width }) => $width}px;
  padding-top: 2px;
`;

const BigIcon = styled.svg`
  flex: none;
  width: 28px;
  height: 28px;
  margin-bottom: 5px;
  overflow: visible;
  fill: none;
  stroke: ${NAVY};
  stroke-width: 1.200;
`;

const ToolLine = styled.span`
  display: flex;
  align-items: center;
  justify-content: center;
  height: 17px;
  line-height: 17px;
  white-space: nowrap;
  gap: 4px;
`;

const Caret = styled.i`
  border: 3px solid transparent;
  border-top-color: ${({ $color }) => $color || "#444"};
  border-bottom: 0;
`;

const Workspace = styled.main`
  position: relative;
  display: flex;
  flex: 1;
  min-height: 0;
`;

const SidePanel = styled.aside`
  display: flex;
  flex-direction: column;
  flex: none;
  width: 300px;
  background: #f0f0f0;
`;

const PanelHeader = styled.div`
  display: flex;
  align-items: center;
  flex: none;
  height: 37px;
  padding: 0 5px 0 4px;
  gap: 9px;
  background: #f5f5f5;
  border-bottom: 2px solid #e4e4e4;

  h2 {
    flex: 1;
    font-size: 16px;
    line-height: 24px;
    color: #444;
  }
  svg {
    display: block;
  }
`;

const TreeBox = styled.div`
  display: flex;
  flex: 1;
  min-height: 0;
  border: 1px solid #555;
  background: #fff;
`;

const TreeList = styled.ul`
  flex: 1;
  overflow: hidden;
  list-style: none;
`;

const TreeRow = styled.li`
  display: flex;
  align-items: center;
  height: 24px;
  padding-left: ${({ $level }) => $level * 19 + 6}px;
  line-height: 22px;
  color: #000;
  white-space: nowrap;

  span {
    margin-left: 3px;
    padding-bottom: 2px;
  }
  svg {
    flex: none;
  }
`;

const ExpanderSlot = styled.div`
  flex: none;
  width: 14px;
`;

const Expander = styled.button`
  display: block;
  width: 9px;
  height: 9px;
  border: 1px solid #999;
  border-radius: 1px;
  background: linear-gradient(#3b5bb0, #3b5bb0) center / 5px 1px no-repeat #f6f6f6;
`;

const TreeScroll = styled.div`
  width: 15px;
  padding: 58px 6px 36px 7px;
  background: #f0f0f0;

  i {
    display: block;
    height: 100%;
    background: #858585;
  }
`;

const Splitter = styled.div`
  flex: none;
  width: 3px;
  background: #d6d6d6;
`;

const Viewport = styled.div`
  position: relative;
  flex: 1;
  min-width: 0;
  background: #fff;
`;

const ModelSvg = styled.svg`
  display: block;
  width: 100%;
  height: 100%;
`;

const CubeSvg = styled.svg`
  position: absolute;
  top: 53px;
  right: 50px;
  width: 72px;
  height: 72px;
`;

const Messages = styled.div`
  position: absolute;
  left: 0;
  bottom: 8px;
  display: grid;
  gap: 9px;
  width: 376px;

  p {
    height: 21px;
    padding-left: 10px;
    font-size: 16px;
    line-height: 23px;
    color: #333;
    background: rgba(255, 255, 255, 0.8);
  }
`;

const PropertyBody = styled.div`
  display: flex;
  flex-direction: column;
  flex: 1;
  min-height: 0;
  padding: 1px 0 49px 11px;
`;

const ZoomTrack = styled.div`
  flex: none;
  width: 271px;
  height: 22px;
  padding-left: 225px;
  border-top: 3px solid #a9a9a9;

  i {
    display: block;
    width: 6px;
    height: 18px;
    background: #a9a9a9;
  }
`;

const PropertyScroll = styled.div`
  display: flex;
  flex: 1;
  min-height: 0;
  overflow: hidden;
`;

const PropertyList = styled.div`
  display: flex;
  flex-direction: column;
  gap: 11px;
  width: 273px;
  padding-right: 1px;
  border-right: 1px solid #fff;
`;

const PropertyThumb = styled.i`
  flex: none;
  width: 2px;
  height: 77%;
  margin-left: 7px;
  background: #858585;
`;

const PropertyGroup = styled.section`
  flex: none;
  padding-bottom: 1px;
  border: 1px solid #a0a0a0;
  border-top-width: ${({ $cut }) => ($cut ? 0 : 1)}px;
`;

const PropertyHead = styled.div`
  display: flex;
  align-items: flex-start;
  justify-content: space-between;
  height: 21px;
  padding: 0 5px;
  background: #a9a9a9;

  h3 {
    font-size: 15px;
    line-height: 18px;
    color: #111;
  }
  svg {
    margin-top: 4px;
  }
`;

const Row = styled.div`
  display: flex;
  align-items: flex-start;
  height: 25px;
  padding: 2px 9px 0 13px;
  color: #000;

  > label:first-child {
    width: 78px;
    line-height: 18px;
    white-space: nowrap;
  }
`;

const TextBox = styled.input`
  width: ${({ $short }) => ($short ? 85 : 169)}px;
  height: 20px;
  padding: 0 2px 2px;
  border: 1px solid #555;
  background: #fff;
  color: ${({ $muted }) => ($muted ? "#777" : "#000")};
`;

const SelectBox = styled.div`
  display: grid;
  align-items: center;
  width: 169px;

  > * {
    grid-area: 1 / 1;
  }
  select {
    appearance: none;
    width: 100%;
    height: 21px;
    padding: 0 3px;
    border: 1px solid ${({ $strong }) => ($strong ? "#888" : "#ccc")};
    border-radius: 2px;
    background: ${({ $strong }) => ($strong ? "#fff" : "#fcfcfc")};
    color: #000;
  }
  svg {
    justify-self: end;
    margin-right: 4px;
    pointer-events: none;
  }
`;

const AutoLabel = styled.label`
  display: flex;
  align-items: center;
  gap: 2px;
  height: 21px;
  margin-left: 5px;
  white-space: nowrap;
`;

const CheckBox = styled.span`
  display: grid;
  place-items: center;

  > * {
    grid-area: 1 / 1;
  }
  input {
    appearance: none;
    width: 13px;
    height: 13px;
    margin: 0;
    border-radius: 2px;
    background: #0a5eb8;
  }
`;

const CommandBar = styled.div`
  display: flex;
  flex: none;
  height: 31px;
  background: #e6e6e6;
  border-top: 1px solid #d3d3d3;
`;

const CommandLine = styled.div`
  display: flex;
  align-items: center;
  width: 646px;
  background: #fdfdfd;

  input {
    flex: 1;
    height: 24px;
    margin-left: 6px;
    padding: 0 2px 2px;
    border: 0;
    background: none;
  }
  input::placeholder {
    color: #888;
    opacity: 1;
  }
`;

const CommandTools = styled.div`
  display: flex;
  align-items: center;
  gap: 2px;
  padding: 0 4px 0 0;
  border-radius: 3px;
  background: #fff;
`;

const Grip = styled.i`
  width: 2px;
  height: 14px;
  margin: 0 3px 0 4px;
  background: repeating-linear-gradient(#aaa 0 2px, transparent 2px 4px);
`;

const Divider = styled.i`
  flex: none;
  width: 1px;
  height: ${({ $tall }) => ($tall ? 22 : 16)}px;
  margin: ${({ $tall }) => ($tall ? "0 3px 0 2px" : "0")};
  background: #c8c8c8;
`;

const SmallButton = styled.button`
  flex: none;
  width: ${({ $size }) => $size}px;
  height: ${({ $size }) => $size}px;
  border: 1px solid ${({ $active }) => ($active ? "#3e9484" : "transparent")};
  background: ${({ $active }) => ($active ? "#c3dfda" : "none")};

  svg {
    display: block;
    width: 18px;
    height: 18px;
    margin: auto;
    fill: none;
    stroke: ${NAVY};
    stroke-width: 1.200;
  }
`;

const StatusBar = styled.footer`
  display: grid;
  grid-template-columns: 1fr auto 1fr;
  align-items: center;
  flex: none;
  height: 29px;
  padding-bottom: 2px;
  border-top: 1px solid #ccc;
  border-bottom: 1px solid #aaa;
  background: #f0f0f0;
`;

const StatusTools = styled.div`
  display: flex;
  align-items: center;
  justify-content: ${({ $end }) => ($end ? "flex-end" : "flex-start")};
  gap: 6px;
  padding: 0 ${({ $end }) => ($end ? 8 : 6)}px;
`;

const SnapGroup = styled.div`
  display: flex;
  align-items: center;
  gap: 1px;
  margin-right: 1px;
`;

const ZoomStep = styled.button`
  width: 18px;

  svg {
    display: block;
    margin: auto;
    stroke: #999;
    stroke-width: 1.500;
  }
`;

const Slider = styled.input`
  appearance: none;
  width: 61px;
  height: 14px;
  margin: 0 -1px;
  background: linear-gradient(#999, #999) center / 100% 1px no-repeat;

  &::-webkit-slider-thumb {
    appearance: none;
    width: 5px;
    height: 14px;
    border: 1px solid #999;
    background: #e6e6e6;
  }
`;

const Coordinates = styled.output`
  margin-left: 346px;
  line-height: 20px;
  padding-bottom: 2px;
  white-space: pre;
  color: #333;
`;

const Desktop = styled.div`
  flex: none;
  height: 7px;
  background:
    radial-gradient(circle at 38px 13px, #b9332f 9px, transparent 10px),
    linear-gradient(90deg, #dadada, #d8d8d8 50%, #e1d5d5 60%, #cddfe8 66%, #d8dfe2 85%, #ddd8d6);
`;

const Mark = styled.div`
  position: absolute;
  border: 3px solid #fd3a39;
  pointer-events: none;
`;

const RibbonMark = styled(Mark)`
  left: 1240px;
  top: 46px;
  width: 63px;
  height: 104px;
`;

const MessageMark = styled(Mark)`
  left: 5px;
  bottom: 52px;
  width: 374px;
  height: 119px;
`;

const PanelMark = styled(Mark)`
  top: 165px;
  right: -2px;
  bottom: 88px;
  width: 316px;
  z-index: 1;
`;
